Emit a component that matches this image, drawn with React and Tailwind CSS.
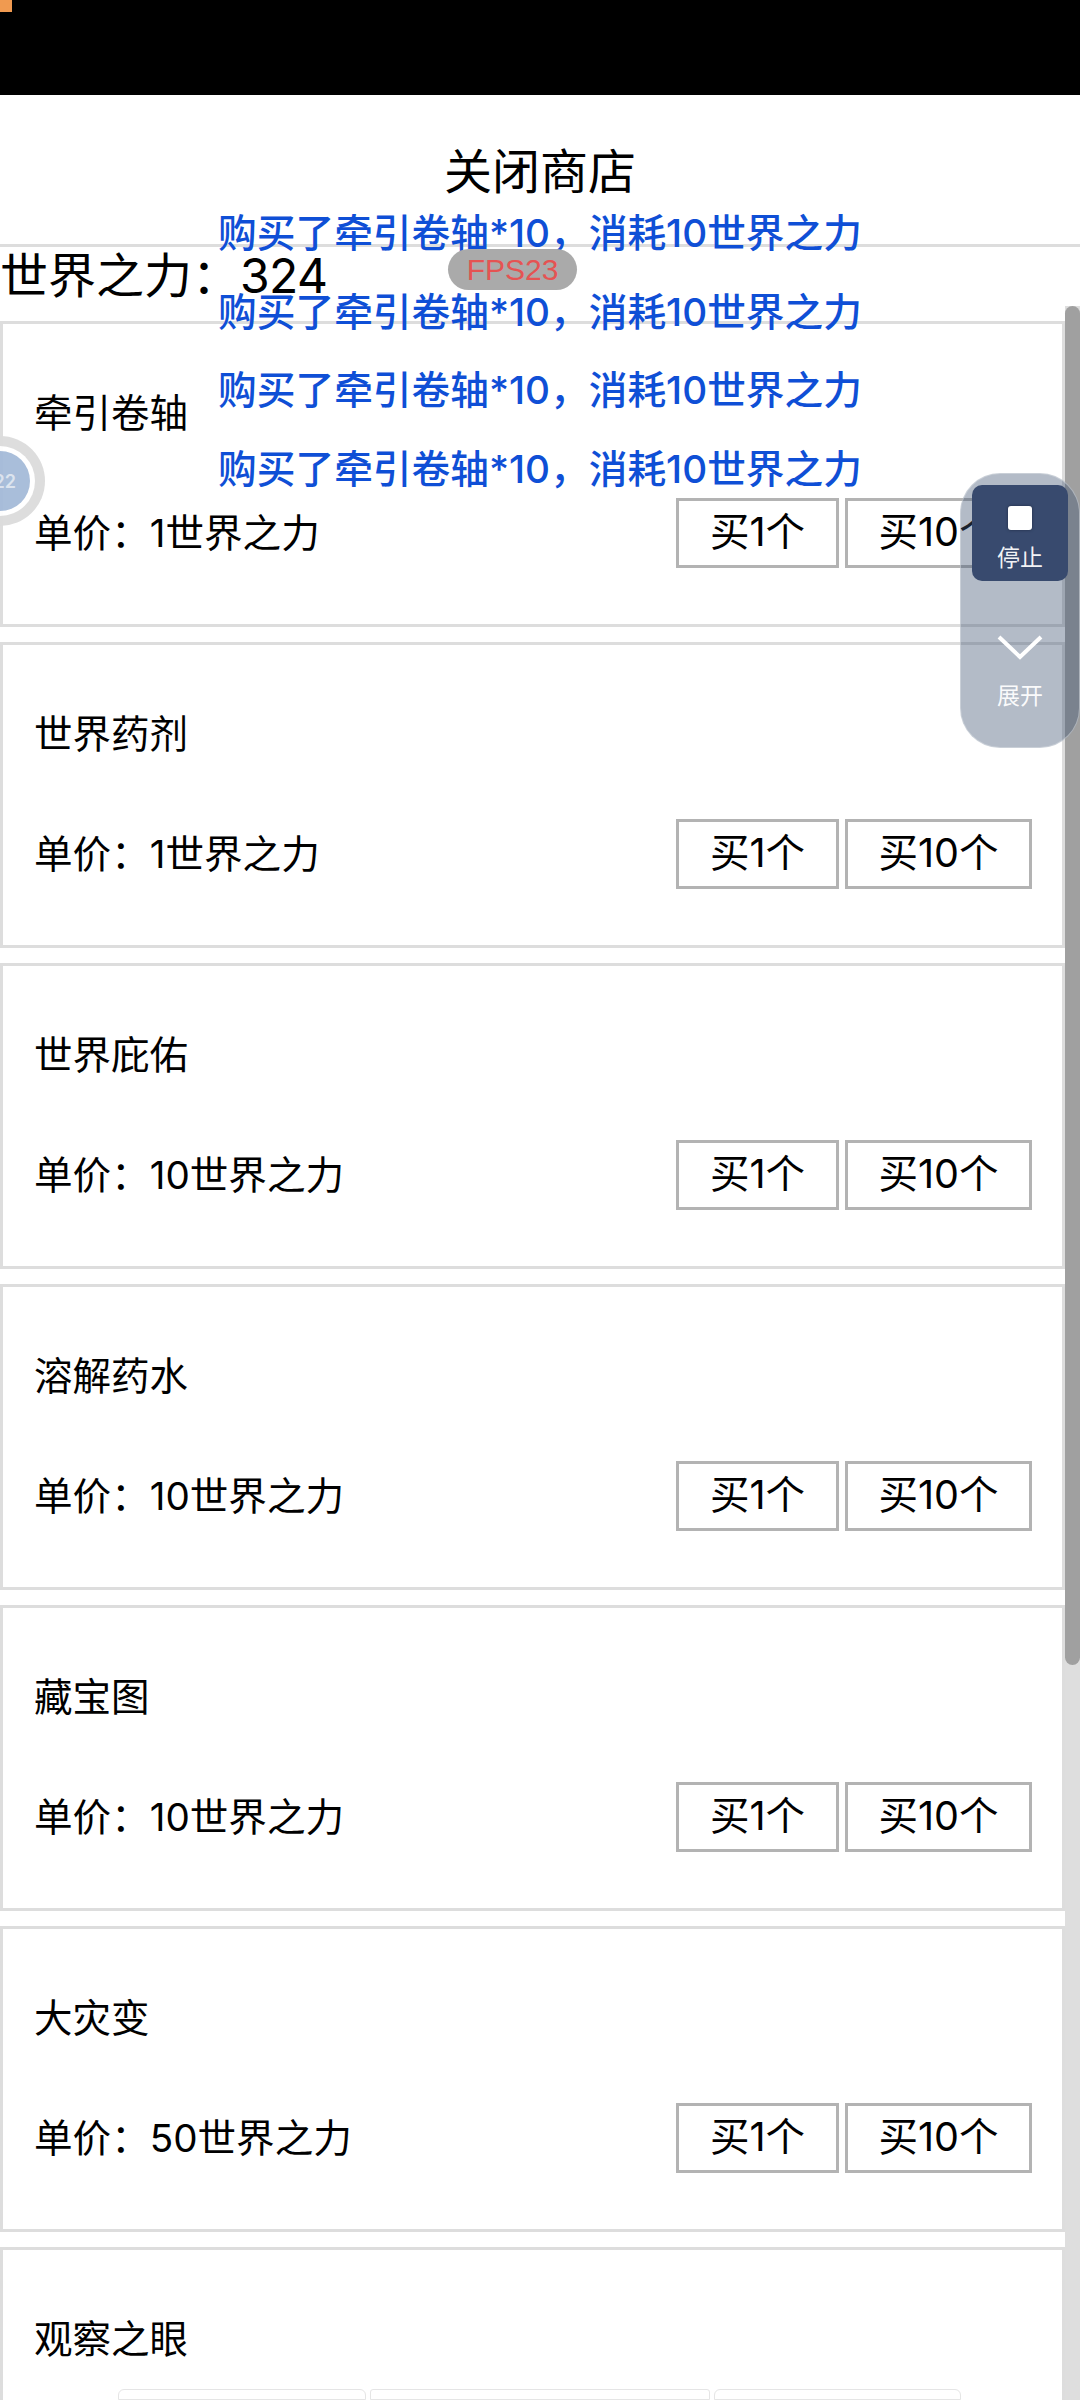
const CJK = "font-['Inter','Noto_Sans_CJK_SC',sans-serif]";

const items = [
  ["牵引卷轴", "1世界之力"],
  ["世界药剂", "1世界之力"],
  ["世界庇佑", "10世界之力"],
  ["溶解药水", "10世界之力"],
  ["藏宝图", "10世界之力"],
  ["大灾变", "50世界之力"],
  ["观察之眼", "50世界之力"],
];

function Card({ name, price }) {
  return (
    <div className="h-[306px] shrink-0 border-[3px] border-[#dddddd] bg-white pl-[31px] pr-[30px] pt-[64px]">
      <div className="h-[50px] text-[38.5px] leading-[50px] text-black">{name}</div>
      <div className="mt-[60px] flex h-[70px] items-center justify-between">
        <div className="text-[38.6px] leading-[50px] text-black">单价：{price}</div>
        <div className="flex gap-[6px]">
          <button className="h-[70px] w-[163px] border-[3px] border-[#b3b3b3] bg-white text-[39.5px] leading-none text-black">买1个</button>
          <button className="h-[70px] w-[187px] border-[3px] border-[#b3b3b3] bg-white text-[39.5px] leading-none text-black">买10个</button>
        </div>
      </div>
    </div>
  );
}

export default function App() {
  return (
    <div className={`relative flex h-[2400px] w-[1080px] flex-col overflow-hidden bg-white ${CJK}`}>
      {/* status bar */}
      <div className="relative h-[95px] shrink-0 bg-black">
        <div className="absolute left-0 top-0 h-3 w-3 bg-[#f09a50]" />
      </div>

      {/* header */}
      <div className="h-[152px] shrink-0 border-b-[3px] border-[#dddddd] pt-[47px] text-center text-[48px] leading-[60px] text-black">关闭商店</div>

      {/* scrolling page */}
      <div className="flex min-h-0 flex-1">
        <div className="flex w-[1065px] shrink-0 flex-col">
          <div className="h-[74px] shrink-0 pt-[2px] text-[48px] leading-[54px] text-black">世界之力：<span className="tracking-[-0.6px]">324</span></div>
          <div className="flex flex-col gap-[15px]">
            {items.map(([n, p]) => (
              <Card key={n} name={n} price={p} />
            ))}
          </div>
        </div>
        <div className="mt-[59px] flex-1 bg-[#dedede]">
          <div className="h-[1359px] rounded-[8px] bg-[#a0a0a0]" />
        </div>
      </div>

      {/* toasts */}
      <div className="absolute left-0 top-[208px] flex w-full flex-col items-center gap-[28.5px]">
        {[0, 1, 2, 3].map((i) => (
          <div key={i} className="h-[50px] text-[38.7px] font-medium leading-[50px] text-[#0f4fd6]">购买了牵引卷轴*10，消耗10世界之力</div>
        ))}
      </div>

      {/* fps */}
      <div className="absolute left-[448px] top-[249px] flex h-[41px] w-[129px] items-center justify-center rounded-full bg-[#aaaaaa] font-['Liberation_Sans',sans-serif] text-[30px] text-[#e55353]">FPS23</div>

      {/* floating ball */}
      <div className="absolute left-[-45px] top-[436px] flex h-[90px] w-[90px] items-center justify-center rounded-full bg-[#dcdcdc] opacity-95">
        <div className="flex h-[70px] w-[70px] items-center justify-center rounded-full bg-white">
          <div className="flex h-[60px] w-[60px] items-center justify-end rounded-full bg-[#a5bbd9] pr-[14px] text-[18px] font-semibold text-[#dbe3ee]">22</div>
        </div>
      </div>

      {/* floating panel */}
      <div className="absolute left-[960px] top-[473px] flex h-[275px] w-[120px] flex-col items-center rounded-[40px] border border-[#dfe3e8]/50 bg-[#415573]/40 pt-[11px]">
        <div className="flex h-[96px] w-[96px] flex-col items-center rounded-[10px] bg-[#384a6e] pt-[21px]">
          <div className="h-6 w-6 rounded-[3px] bg-white shadow-[0_0_3px_#1f2b44]" />
          <div className="mt-[12px] text-[23px] leading-[32px] text-white/95">停止</div>
        </div>
        <svg className="mt-[53px]" width="48" height="26" viewBox="0 0 48 26" fill="none">
          <path d="M3 3 L24 23 L45 3" stroke="#ffffff" strokeWidth="4" />
        </svg>
        <div className="mt-[20px] text-[23px] leading-[32px] text-white/95">展开</div>
      </div>

      {/* bottom tabs */}
      <div className="absolute left-[118px] top-[2389px] flex gap-[4px]">
        <div className="h-[11px] w-[248px] rounded-t-[6px] border border-[#e5e5e5] bg-white" />
        <div className="h-[11px] w-[340px] rounded-t-[3px] border border-[#e5e5e5] bg-white" />
        <div className="h-[11px] w-[247px] rounded-t-[6px] border border-[#e5e5e5] bg-white" />
      </div>
    </div>
  );
}
